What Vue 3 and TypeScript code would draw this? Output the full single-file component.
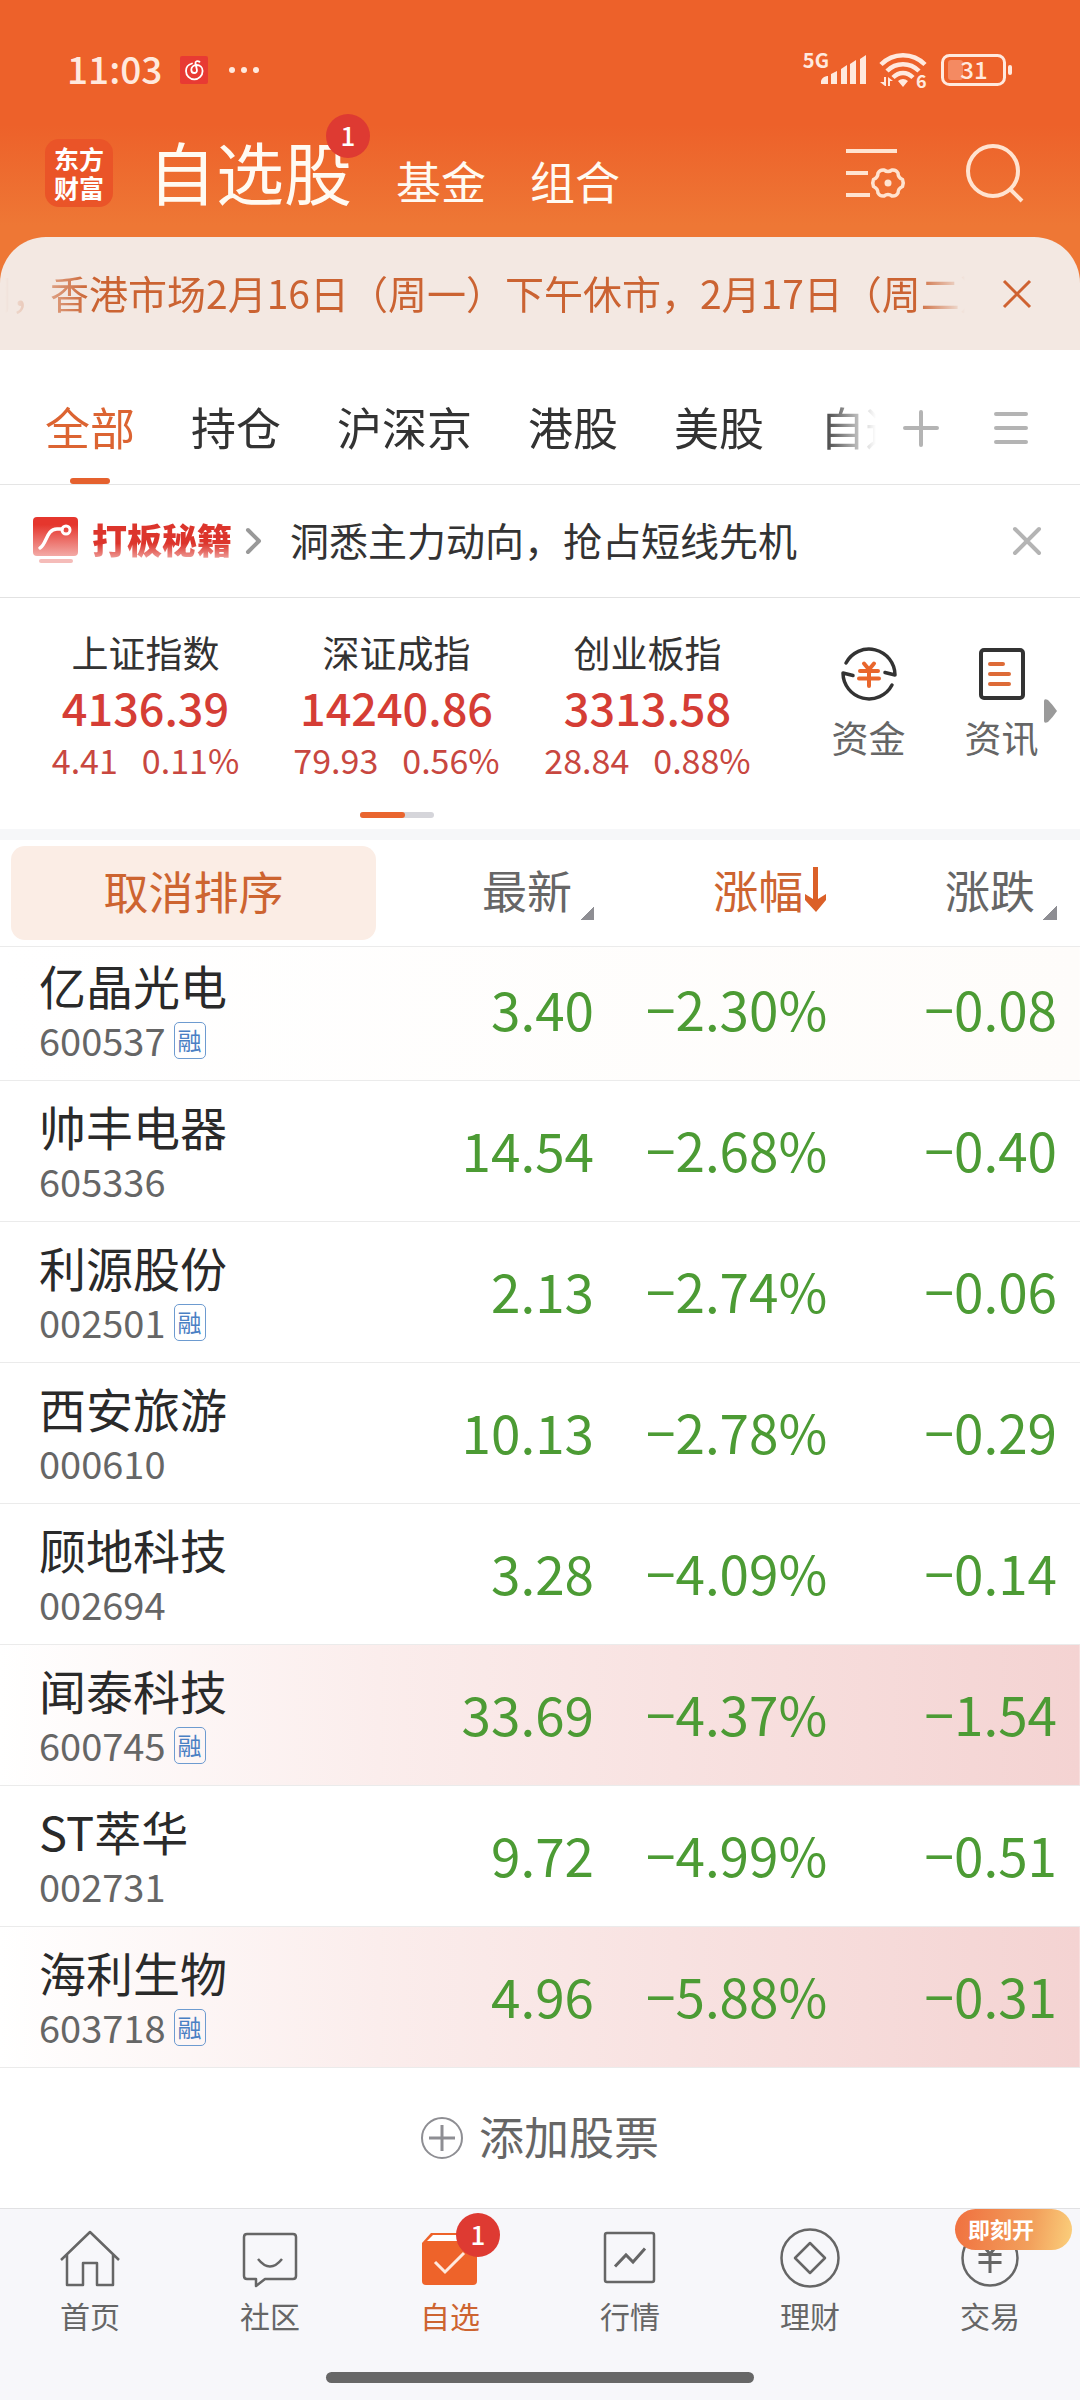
<script setup lang="ts">
import { ref } from 'vue'

interface IndexQuote {
  name: string
  price: string
  change: string
  percent: string
}

interface Stock {
  name: string
  code: string
  margin: boolean
  price: string
  percent: string
  change: string
  tone: 'plain' | 'faint' | 'held'
}

const groups = ['全部', '持仓', '沪深京', '港股', '美股', '自选']
const activeGroup = ref('全部')

const indexes: IndexQuote[] = [
  { name: '上证指数', price: '4136.39', change: '4.41', percent: '0.11%' },
  { name: '深证成指', price: '14240.86', change: '79.93', percent: '0.56%' },
  { name: '创业板指', price: '3313.58', change: '28.84', percent: '0.88%' },
]

const stocks: Stock[] = [
  { name: '亿晶光电', code: '600537', margin: true, price: '3.40', percent: '−2.30%', change: '−0.08', tone: 'faint' },
  { name: '帅丰电器', code: '605336', margin: false, price: '14.54', percent: '−2.68%', change: '−0.40', tone: 'plain' },
  { name: '利源股份', code: '002501', margin: true, price: '2.13', percent: '−2.74%', change: '−0.06', tone: 'plain' },
  { name: '西安旅游', code: '000610', margin: false, price: '10.13', percent: '−2.78%', change: '−0.29', tone: 'plain' },
  { name: '顾地科技', code: '002694', margin: false, price: '3.28', percent: '−4.09%', change: '−0.14', tone: 'plain' },
  { name: '闻泰科技', code: '600745', margin: true, price: '33.69', percent: '−4.37%', change: '−1.54', tone: 'held' },
  { name: 'ST萃华', code: '002731', margin: false, price: '9.72', percent: '−4.99%', change: '−0.51', tone: 'plain' },
  { name: '海利生物', code: '603718', margin: true, price: '4.96', percent: '−5.88%', change: '−0.31', tone: 'held' },
]
</script>

<template>
  <div class="app">
    <header class="top">
      <div class="status">
        <div class="status-side">
          <span class="clock">11:03</span>
          <svg class="music" width="28" height="28" viewBox="0 0 28 28" aria-hidden="true">
            <rect width="28" height="28" rx="2" fill="#e83a33" />
            <path d="M12 7.500C8 8.500 6 11.500 6 15a8.300 8.300 0 0 0 16.600 0c0-3.500-2.600-6-6-6-3 0-5.300 2-5.300 4.700 0 2 1.300 3.300 3 3.300s3-1.300 2.600-3.300L15.500 7.500c-.5-2.200 2-3.200 4-1.700" fill="none" stroke="#fff" stroke-width="1.800" stroke-linecap="round" />
          </svg>
          <svg width="32" height="8" viewBox="0 0 32 8" aria-hidden="true">
            <circle cx="4" cy="4" r="3" fill="#ffe9de" /><circle cx="16" cy="4" r="3" fill="#ffe9de" /><circle cx="28" cy="4" r="3" fill="#ffe9de" />
          </svg>
        </div>
        <div class="status-side">
          <div class="signal">
            <span class="net">5G</span>
            <svg width="46" height="30" viewBox="0 0 46 30" fill="#ffe9de" aria-hidden="true">
              <path d="M0 29v-3q1-4 6-5h1v8zM10 29V19l6-3v13zM20 29V14l6-4v19zM29 29V9l6-4v24zM39 29V4l6-4v29z" />
            </svg>
          </div>
          <svg class="wifi" width="48" height="38" viewBox="0 0 48 38" aria-hidden="true">
            <g fill="none" stroke="#ffe9de" stroke-width="4.500">
              <path d="M2 13.500C14 1 34 1 46 13.500" />
              <path d="M8 20C17 11 31 11 40 20" />
              <path d="M14 26.500c6-6 14-6 20 0" />
            </g>
            <path d="M19 30q5-4 10 0l-5 6zM5 26h2v9H6l-5-4h4zM9 35v-9l5 4h-3v5z" fill="#ffe9de" />
            <text x="37" y="37" font-size="18" font-weight="700" fill="#ffe9de">6</text>
          </svg>
          <svg class="battery" width="72" height="34" viewBox="0 0 72 34" aria-hidden="true">
            <rect x="1.500" y="2.500" width="62" height="29" rx="7" fill="none" stroke="#ffe9de" stroke-width="3" />
            <rect x="7" y="7" width="15" height="20" rx="3" fill="#f48a62" />
            <rect x="67" y="12" width="4" height="10" rx="2" fill="#ffe9de" />
            <text x="33" y="26" font-size="24" font-weight="500" text-anchor="middle" fill="#ffe9de">31</text>
          </svg>
        </div>
      </div>

      <div class="title-row">
        <div class="logo">东方<br />财富</div>
        <nav class="sections">
          <a class="section current" href="#watch">自选股<span class="badge">1</span></a>
          <a class="section" href="#fund">基金</a>
          <a class="section" href="#portfolio">组合</a>
        </nav>
        <div class="actions">
          <button type="button" aria-label="列表设置">
            <svg width="60" height="60" viewBox="0 0 60 60" fill="none" stroke="#ffe3d0" stroke-width="4">
              <path d="M0 8h51M0 30h22M0 52h24" />
              <path d="M38 27q4 3 8 0 4-.5 6 3 0 4.500 4.500 6.500 1.500 3.500 0 7-4.500 2-4.500 6.500-2 3.500-6 3-4-3-8 0-4 .5-6-3 0-4.500-4.500-6.500-1.500-3.500 0-7 4.500-2 4.500-6.500 2-3.500 6-3z" stroke-width="3.500" stroke-linejoin="round" />
              <circle cx="42" cy="40" r="3.500" fill="#ffe3d0" stroke="none" />
            </svg>
          </button>
          <button type="button" aria-label="搜索">
            <svg width="58" height="60" viewBox="0 0 58 60" fill="none" stroke="#ffe3d0" stroke-width="4">
              <circle cx="27" cy="28" r="25" /><path d="M44 46l12 12" />
            </svg>
          </button>
        </div>
      </div>

      <div class="notice">
        <p class="marquee"><span>期，香港市场2月16日（周一）下午休市，2月17日（周二）</span></p>
        <button type="button" aria-label="关闭公告">
          <svg width="28" height="28" viewBox="0 0 28 28" stroke="#cf6231" stroke-width="3"><path d="M1 1l26 26M27 1L1 27" /></svg>
        </button>
      </div>
    </header>

    <div class="groups">
      <div class="group-list">
        <button
          v-for="g in groups"
          :key="g"
          type="button"
          class="group"
          :class="{ on: g === activeGroup }"
          @click="activeGroup = g"
        >{{ g }}</button>
      </div>
      <button type="button" aria-label="新建分组">
        <svg width="36" height="42" viewBox="0 0 36 42" stroke="#b4b4b4" stroke-width="4" stroke-linecap="round"><path d="M2 23h32M18 7v33" /></svg>
      </button>
      <button type="button" aria-label="管理分组" class="manage">
        <svg width="34" height="42" viewBox="0 0 34 42" stroke="#b4b4b4" stroke-width="4" stroke-linecap="round"><path d="M2 9h30M2 23h30M2 37h30" /></svg>
      </button>
    </div>

    <div class="promo">
      <a class="promo-link" href="#tips">
        <svg width="46" height="48" viewBox="0 0 46 48" aria-hidden="true">
          <defs>
            <linearGradient id="tip" x1="0" y1="0" x2="0" y2="1">
              <stop offset=".2" stop-color="#e5362d" /><stop offset="1" stop-color="#f3aaa6" />
            </linearGradient>
          </defs>
          <rect width="45" height="39" rx="4" fill="url(#tip)" />
          <path d="M7 31c7-4 6-19 17-19h5" fill="none" stroke="#fff" stroke-width="3.500" stroke-linecap="round" />
          <circle cx="33" cy="13" r="4" fill="none" stroke="#fff" stroke-width="3" />
          <rect x="6" y="42" width="34" height="4" rx="2" fill="#f5bcb9" />
        </svg>
        <strong>打板秘籍</strong>
        <svg width="16" height="26" viewBox="0 0 16 26" fill="none" stroke="#999" stroke-width="4" stroke-linecap="round" stroke-linejoin="round" aria-hidden="true"><path d="M2 2l11 11L2 24" /></svg>
      </a>
      <p>洞悉主力动向，抢占短线先机</p>
      <button type="button" aria-label="关闭推荐">
        <svg width="28" height="28" viewBox="0 0 28 28" stroke="#b4b4b4" stroke-width="4" stroke-linecap="round"><path d="M2 2l24 24M26 2L2 26" /></svg>
      </button>
    </div>

    <section class="market">
      <div class="quotes">
        <div class="quote-grid">
          <div v-for="q in indexes" :key="q.name" class="quote">
            <div class="quote-name">{{ q.name }}</div>
            <div class="quote-price">{{ q.price }}</div>
            <div class="quote-change"><span>{{ q.change }}</span><span>{{ q.percent }}</span></div>
          </div>
        </div>
        <div class="pager"><i></i></div>
      </div>
      <div class="tools">
        <a href="#capital" class="tool">
          <svg width="60" height="60" viewBox="0 0 60 60" fill="none" stroke="#333" stroke-width="3.500" stroke-linejoin="round" stroke-linecap="round">
            <path d="M7 19A26 26 0 0 1 56 31L46 28.500" />
            <path d="M53 41A26 26 0 0 1 4 29l10 2.500" />
            <path d="M25 19.500l5 6 5-6M21 27h18M20 34.500h20M30 27v15" stroke="#e9662c" stroke-width="4" />
          </svg>
          <span>资金</span>
        </a>
        <a href="#news" class="tool">
          <svg width="60" height="60" viewBox="0 0 60 60" fill="none" stroke="#333" stroke-width="4" stroke-linecap="round">
            <rect x="9" y="6" width="42" height="48" rx="3" />
            <path d="M18 20h13M18 30h19M18 40h19" stroke="#dd6b37" />
          </svg>
          <span>资讯</span>
        </a>
      </div>
      <svg class="more" width="13" height="24" viewBox="0 0 13 24" aria-hidden="true"><path d="M0 2q0-3 4-1 5 5 9 11-4 6-9 11-4 2-4-1z" fill="#9a9a9a" /></svg>
    </section>

    <table class="stocks">
      <colgroup>
        <col class="c-name" /><col class="c-price" /><col class="c-percent" /><col />
      </colgroup>
      <thead>
        <tr>
          <th class="reset-cell"><button type="button" class="reset">取消排序</button></th>
          <th><button type="button" class="sort">最新<i class="corner"></i></button></th>
          <th>
            <button type="button" class="sort on">涨幅<svg width="22" height="46" viewBox="0 0 22 46" aria-hidden="true"><path d="M8 0h5v32l8-5v6L11 45 0 33v-6l8 5z" fill="#db6028" /></svg></button>
          </th>
          <th><button type="button" class="sort">涨跌<i class="corner"></i></button></th>
        </tr>
      </thead>
      <tbody>
        <tr v-for="s in stocks" :key="s.code" :class="s.tone">
          <td class="stock">
            <div class="stock-name">{{ s.name }}</div>
            <div class="stock-code">{{ s.code }}<span v-if="s.margin" class="tag">融</span></div>
          </td>
          <td>{{ s.price }}</td>
          <td>{{ s.percent }}</td>
          <td>{{ s.change }}</td>
        </tr>
      </tbody>
    </table>

    <button type="button" class="add">
      <svg width="42" height="42" viewBox="0 0 42 42" fill="none" stroke="#8e8e93" stroke-width="2" aria-hidden="true"><circle cx="21" cy="21" r="20" /><path d="M8 21h26M21 8v26" stroke-width="3" /></svg>
      <span>添加股票</span>
    </button>

    <footer class="bottom">
      <nav class="tabs">
        <a href="#home" class="tab">
          <svg width="60" height="60" viewBox="0 0 60 60" fill="none" stroke="#666" stroke-width="2.500" stroke-linejoin="round">
            <path d="M1 32L30 4l29 28M7 27v30h16V35h14v22h16V27" />
          </svg>
          <span>首页</span>
        </a>
        <a href="#community" class="tab">
          <svg width="60" height="60" viewBox="0 0 60 60" fill="none" stroke="#666" stroke-width="2.500" stroke-linejoin="round">
            <path d="M7 6h46q3 0 3 3v39q0 3-3 3H25l-9 7v-7H7q-3 0-3-3V9q0-3 3-3z" />
            <path d="M18 31q12 15 24 0" />
          </svg>
          <span>社区</span>
        </a>
        <a href="#watch" class="tab on">
          <svg width="60" height="60" viewBox="0 0 60 60">
            <path d="M2 15L11 5h38l8 10v38q0 4-4 4H6q-4 0-4-4z" fill="#ee632a" />
            <path d="M7 13l6-6h34l5 6z" fill="#fff" />
            <path d="M15 34l10 10 19-19" fill="none" stroke="#ffe9de" stroke-width="3" />
          </svg>
          <span>自选</span>
          <b class="badge">1</b>
        </a>
        <a href="#quotes" class="tab">
          <svg width="60" height="60" viewBox="0 0 60 60" fill="none" stroke="#666" stroke-width="2.500">
            <rect x="5" y="5" width="49" height="49" rx="2" />
            <path d="M15 38.500L26 27l7 7 12-13.500" stroke-width="3" />
          </svg>
          <span>行情</span>
        </a>
        <a href="#wealth" class="tab">
          <svg width="60" height="60" viewBox="0 0 60 60" fill="none" stroke="#666" stroke-width="2.500" stroke-linejoin="round">
            <circle cx="30" cy="30" r="28.500" /><path d="M30 15l15 15-15 15-15-15z" />
          </svg>
          <span>理财</span>
        </a>
        <a href="#trade" class="tab">
          <svg width="60" height="60" viewBox="0 0 60 60" fill="none" stroke="#666" stroke-width="2.500">
            <circle cx="30" cy="30" r="27.500" /><path d="M20 14l10 12 10-12M18.500 26.500h23M18.500 34.500h23M30 26v19" stroke-width="3" />
          </svg>
          <span>交易</span>
          <b class="ribbon">即刻开</b>
        </a>
      </nav>
      <div class="home-bar"></div>
    </footer>
  </div>
</template>

<style>
body {
  margin: 0;
  background: #fff;
}
</style>

<style scoped>
.app {
  font-family: "Noto Sans CJK SC", "Noto Sans", sans-serif;
  color: #333;
  background: #fff;
  overflow: hidden;
}
button {
  font: inherit;
  color: inherit;
  background: none;
  border: 0;
  padding: 0;
  margin: 0;
  cursor: pointer;
}
a {
  color: inherit;
  text-decoration: none;
}
p {
  margin: 0;
}
svg {
  display: block;
  flex: none;
  overflow: visible;
}

.top {
  background: linear-gradient(#ed612a 0, #ed612a 125px, #ee7735 225px);
}
.status {
  height: 139px;
  display: flex;
  justify-content: space-between;
  align-items: center;
  padding: 0 67px;
  color: #ffe9de;
}
.status-side {
  display: flex;
  align-items: center;
}
.clock {
  font-size: 37px;
  line-height: 48px;
  padding-bottom: 4px;
  font-weight: 500;
}
.music {
  margin: 0 20px 0 18px;
}
.signal {
  display: flex;
  align-items: flex-start;
}
.signal svg {
  margin-left: -8px;
}
.net {
  font-size: 20px;
  line-height: 20px;
  margin-top: -5px;
  font-weight: 700;
}
.wifi {
  margin: 0 14px 0 12px;
}

.title-row {
  height: 68px;
  padding: 0 56px 30px 45px;
  display: flex;
  align-items: center;
}
.logo {
  width: 68px;
  height: 58px;
  padding: 5px 0;
  border-radius: 14px;
  background: #ea5428;
  color: #fff;
  font-size: 25px;
  line-height: 29px;
  font-weight: 700;
  text-align: center;
}
.sections {
  display: flex;
  align-items: baseline;
  gap: 44px;
  margin-left: 35px;
  color: #fffaf2;
}
.section {
  font-size: 45px;
  line-height: 60px;
}
.section.current {
  position: relative;
  font-size: 68px;
  line-height: 76px;
  padding-bottom: 4px;
}
.badge {
  position: absolute;
  width: 44px;
  height: 44px;
  border-radius: 22px;
  background: #de3a32;
  color: #fff;
  font-size: 26px;
  line-height: 41px;
  font-weight: 500;
  text-align: center;
}
.section .badge {
  top: -19px;
  right: -18px;
}
.actions {
  margin-left: auto;
  display: flex;
  gap: 60px;
}

.notice {
  height: 113px;
  border-radius: 46px 46px 0 0;
  background: #f3e8e2;
  display: flex;
  align-items: center;
  padding-right: 49px;
}
.marquee {
  flex: 1;
  min-width: 0;
  overflow: hidden;
  white-space: nowrap;
  margin-right: 38px;
  padding-bottom: 4px;
  color: #cb6332;
  font-size: 39px;
  line-height: 58px;
  mask-image: linear-gradient(90deg, transparent 5px, #000 90px, #000 calc(100% - 50px), transparent);
}
.marquee span {
  margin-left: -28px;
}

.groups {
  height: 116px;
  padding: 18px 52px 0 45px;
  border-bottom: 1px solid #e5e5e5;
  display: flex;
  align-items: center;
}
.group-list {
  flex: 1;
  min-width: 0;
  align-self: stretch;
  display: flex;
  gap: 56px;
  overflow: hidden;
  margin-right: 27px;
  mask-image: linear-gradient(90deg, #000 calc(100% - 56px), transparent);
}
.group {
  position: relative;
  flex: none;
  font-size: 45px;
}
.group.on {
  color: #dc6432;
}
.group.on::after {
  content: "";
  position: absolute;
  left: calc(50% - 20px);
  bottom: 0;
  width: 40px;
  height: 6px;
  border-radius: 3px;
  background: #e5612e;
}
.manage {
  margin-left: 55px;
}

.promo {
  height: 112px;
  padding: 0 39px 0 33px;
  border-bottom: 1px solid #e2e2e2;
  display: flex;
  align-items: center;
}
.promo-link {
  display: flex;
  align-items: center;
}
.promo-link strong {
  margin: 0 14px 0 13px;
  padding-bottom: 4px;
  font-size: 35px;
  line-height: 44px;
  font-weight: 900;
  color: transparent;
  background: linear-gradient(#dc352c 55%, #f2b0ac 92%);
  background-clip: text;
}
.promo p {
  flex: 1;
  margin-left: 28px;
  padding-bottom: 4px;
  font-size: 39px;
  line-height: 56px;
}

.market {
  position: relative;
  display: flex;
  gap: 29px;
  padding: 32px 12px 11px 20px;
  border-bottom: 11px solid #f6f7f9;
}
.quotes {
  flex: 1;
}
.quote-grid {
  display: grid;
  grid-template-columns: repeat(3, 1fr);
  text-align: center;
}
.quote-name {
  font-size: 37px;
  line-height: 44px;
}
.quote-price {
  font-size: 45px;
  line-height: 66px;
  font-weight: 500;
  color: #d53d35;
}
.quote-change {
  display: flex;
  justify-content: center;
  gap: 24px;
  font-size: 34px;
  line-height: 40px;
  color: #c84740;
}
.pager {
  width: 74px;
  height: 6px;
  margin: 32px auto 0;
  border-radius: 3px;
  background: #d5d5da;
}
.pager i {
  display: block;
  width: 45px;
  height: 6px;
  border-radius: 3px;
  background: #e9652f;
}
.tools {
  flex: none;
  display: flex;
  padding-top: 14px;
}
.tool {
  width: 133px;
  display: flex;
  flex-direction: column;
  align-items: center;
  gap: 11px;
  font-size: 37px;
  line-height: 44px;
  color: #666;
}
.more {
  position: absolute;
  right: 23px;
  top: 101px;
}

.stocks {
  width: 100%;
  table-layout: fixed;
  border-collapse: separate;
  border-spacing: 0;
}
.c-name {
  width: 35%;
}
.c-price {
  width: 20%;
}
.c-percent {
  width: 21.600%;
}
th,
td {
  box-sizing: border-box;
  padding: 0;
  text-align: right;
  border-bottom: 1px solid #ebebeb;
}
th:last-child,
td:last-child {
  padding-right: 23px;
}
th {
  height: 107px;
  font-size: 45px;
  line-height: 60px;
  font-weight: 400;
  color: #666;
}
th.reset-cell {
  padding-left: 11px;
}
.reset {
  display: block;
  width: 100%;
  max-width: 365px;
  height: 94px;
  border-radius: 14px;
  background: #fbede5;
  color: #cd6430;
  padding-bottom: 5px;
}
.sort {
  display: inline-flex;
  align-items: center;
  padding-bottom: 8px;
  vertical-align: middle;
}
.sort.on {
  color: #cd6430;
}
.sort svg {
  margin-left: 2px;
}
.corner {
  align-self: flex-end;
  width: 14px;
  height: 14px;
  margin-left: 8px;
  background: linear-gradient(135deg, transparent 50%, #8e8e93 50%);
}
td {
  height: 141px;
  vertical-align: bottom;
  padding-bottom: 42px;
  font-size: 53px;
  line-height: 60px;
  color: #4c9b34;
}
tbody tr:first-child td {
  height: 134px;
}
td.stock {
  padding: 0 0 15px 39px;
  text-align: left;
  color: #2a2a2a;
}
.stock-name {
  font-size: 47px;
  line-height: 60px;
}
.stock-code {
  display: flex;
  align-items: center;
  gap: 8px;
  font-size: 38px;
  line-height: 50px;
  color: #666;
}
.tag {
  width: 30px;
  height: 35px;
  border: 1px solid #6d9bd0;
  border-radius: 5px;
  font-size: 24px;
  line-height: 33px;
  text-align: center;
  color: #4a80c4;
}
.faint {
  background: linear-gradient(90deg, #fff, #fefcfa);
}
.held {
  background: linear-gradient(90deg, #fff, #fbedec 35%, #f4d3d2);
}

.add {
  width: 100%;
  height: 140px;
  display: flex;
  align-items: center;
  justify-content: center;
  gap: 16px;
  font-size: 45px;
  color: #666;
}
.add span {
  padding-bottom: 5px;
}

.bottom {
  border-top: 1px solid #e1e1e3;
  background: #f7f7fa;
  padding: 19px 0 17px;
}
.tabs {
  display: flex;
}
.tab {
  position: relative;
  flex: 1;
  display: flex;
  flex-direction: column;
  align-items: center;
  gap: 9px;
  font-size: 30px;
  line-height: 36px;
  color: #666;
}
.tab.on {
  color: #cd6430;
}
.tab .badge {
  left: calc(50% + 6px);
  top: -15px;
}
.ribbon {
  position: absolute;
  left: 55px;
  top: -19px;
  width: 104px;
  height: 41px;
  padding-left: 13px;
  border-radius: 21px;
  background: linear-gradient(100deg, #f0703f, #f2a05c 65%, #fbd07c);
  color: #fff;
  font-size: 22px;
  line-height: 39px;
}
.home-bar {
  width: 428px;
  height: 11px;
  margin: 39px auto 0;
  border-radius: 6px;
  background: #676767;
}
</style>
